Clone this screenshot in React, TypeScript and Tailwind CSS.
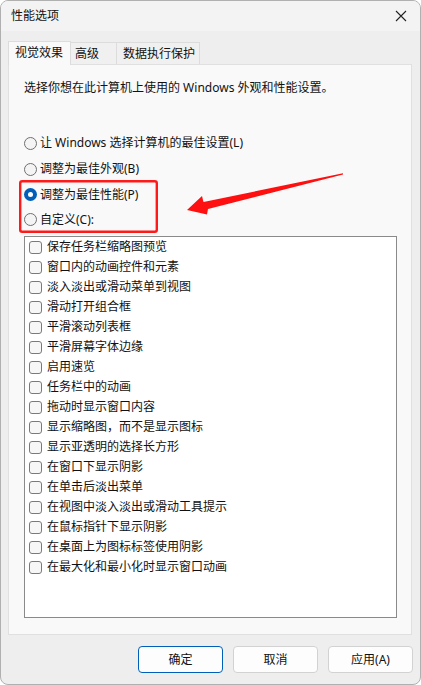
import React from "react";

const items = [
  "保存任务栏缩略图预览",
  "窗口内的动画控件和元素",
  "淡入淡出或滑动菜单到视图",
  "滑动打开组合框",
  "平滑滚动列表框",
  "平滑屏幕字体边缘",
  "启用速览",
  "任务栏中的动画",
  "拖动时显示窗口内容",
  "显示缩略图，而不是显示图标",
  "显示亚透明的选择长方形",
  "在窗口下显示阴影",
  "在单击后淡出菜单",
  "在视图中淡入淡出或滑动工具提示",
  "在鼠标指针下显示阴影",
  "在桌面上为图标标签使用阴影",
  "在最大化和最小化时显示窗口动画",
];

function Radio({ label, checked, h }: { label: string; checked?: boolean; h: string }) {
  return (
    <div className={`flex items-center ${h}`}>
      {checked ? (
        <span className="w-[13px] h-[13px] rounded-full bg-[#005fb8] flex items-center justify-center shrink-0">
          <span className="w-[5px] h-[5px] rounded-full bg-white" />
        </span>
      ) : (
        <span className="w-[13px] h-[13px] rounded-full border border-[#6f6f6f] bg-[#f4f4f4] shrink-0" />
      )}
      <span className="ml-[3px] text-[12px] leading-[16px] text-[#111]">{label}</span>
    </div>
  );
}

export default function App() {
  return (
    <div className="relative w-[421px] h-[685px] overflow-hidden rounded-[8px] border border-[#b0b0b0] bg-[#eeeeee] font-['Noto_Sans','Noto_Sans_CJK_SC',sans-serif] text-[#111]">
      {/* title bar */}
      <div className="h-[30px] bg-[#f3f3f3] flex items-center justify-between pl-[10px] pr-[10px]">
        <span className="text-[12px] leading-[16px]">性能选项</span>
        <svg width="12" height="12" viewBox="0 0 12 12" className="mr-[3px]">
          <path d="M1 1 L11 11 M11 1 L1 11" stroke="#222" strokeWidth="1.1" fill="none" />
        </svg>
      </div>

      {/* tabs */}
      <div className="mt-[9px] ml-[7px] flex items-end h-[24px] relative z-10">
        <div className="w-[63px] h-[24px] bg-[#f9f9f9] border border-b-0 border-[#dcdcdc] flex items-center pl-[6px] text-[12px] leading-[16px] mb-[-1px] pb-[1px]">
          视觉效果
        </div>
        <div className="w-[46px] h-[22px] bg-[#f0f0f0] border border-l-0 border-b-0 border-[#dcdcdc] flex items-center pl-[4px] text-[12px] leading-[16px]">
          高级
        </div>
        <div className="w-[83px] h-[22px] bg-[#f0f0f0] border border-l-0 border-b-0 border-[#dcdcdc] flex items-center pl-[6px] text-[12px] leading-[16px]">
          数据执行保护
        </div>
      </div>

      {/* panel */}
      <div className="ml-[7px] w-[404px] h-[571px] bg-[#f9f9f9] border border-[#e0e0e0] pl-[15px] pt-[15px]">
        <div className="text-[12px] leading-[16px]">选择你想在此计算机上使用的 Windows 外观和性能设置。</div>
        <div className="mt-[34px]">
          <Radio label="让 Windows 选择计算机的最佳设置(L)" h="h-[26px]" />
          <Radio label="调整为最佳外观(B)" h="h-[26px]" />
          <Radio label="调整为最佳性能(P)" checked h="h-[25px]" />
          <Radio label="自定义(C):" h="h-[25px]" />
        </div>
        <div className="mt-[4px] w-[373px] h-[382px] bg-white border border-[#8a8a8a] pl-[4px]">
          {items.map((t) => (
            <div key={t} className="h-[20px] flex items-center">
              <span className="w-[13px] h-[13px] rounded-[3px] border border-[#7a7a7a] bg-[#f7f7f7] shrink-0" />
              <span className="ml-[5px] text-[12px] leading-[16px]">{t}</span>
            </div>
          ))}
        </div>
      </div>

      {/* buttons */}
      <div className="mt-[11px] flex justify-end gap-[10px] pr-[7px]">
        <button className="w-[85px] h-[27px] rounded-[4px] border border-[#005fb8] bg-[#fdfdfd] text-[12px] leading-[16px] flex items-center justify-center">
          确定
        </button>
        <button className="w-[85px] h-[27px] rounded-[4px] border border-[#d2d2d2] bg-[#fdfdfd] text-[12px] leading-[16px] flex items-center justify-center">
          取消
        </button>
        <button className="w-[85px] h-[27px] rounded-[4px] border border-[#d2d2d2] bg-[#fdfdfd] text-[12px] leading-[16px] flex items-center justify-center">
          应用(A)
        </button>
      </div>

      {/* annotations */}
      <svg
        className="absolute left-[-1px] top-[-1px] pointer-events-none"
        width="421"
        height="685"
        viewBox="0 0 421 685"
      >
        <rect x="20.2" y="181.2" width="136.6" height="50.6" rx="2" fill="none" stroke="#ff1a1a" strokeWidth="2.4" />
        <polygon
          points="187,210 202,196 203.5,202 343,173.2 343,174.6 208,209 207,214.5"
          fill="#ff1010"
        />
      </svg>
    </div>
  );
}
